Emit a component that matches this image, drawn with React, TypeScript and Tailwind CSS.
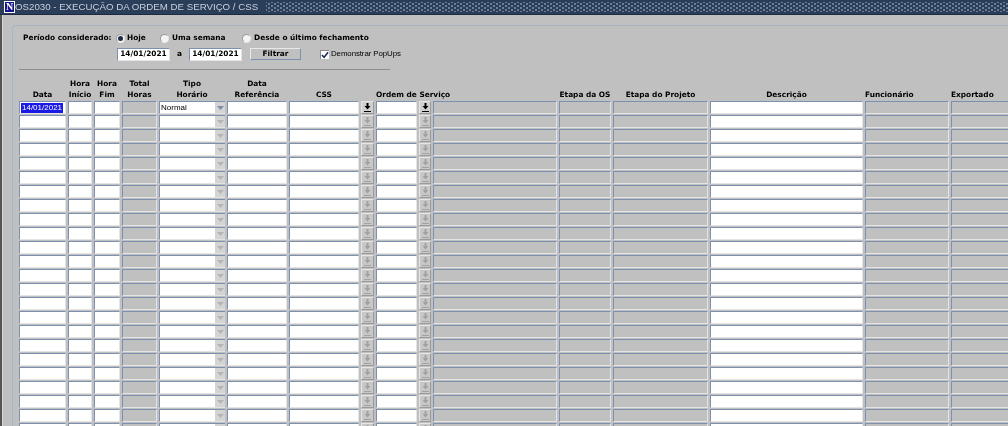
import React from "react";

const gridCls =
  "grid gap-x-[2px] grid-cols-[47px_24px_26px_35px_66px_60px_70px_13px_41px_12px_124px_52px_95px_153px_84px_80px]";

function Field({ gray, children, selected }: { gray?: boolean; children?: React.ReactNode; selected?: boolean }) {
  return (
    <div
      className={`h-[13px] min-w-0 border-t border-l border-t-[#7d90b0] border-l-[#7d90b0] border-b border-r border-b-[#e4e4e4] border-r-[#e4e4e4] flex items-center overflow-hidden ${
        gray ? "bg-[#c0c0c0]" : "bg-white"
      }`}
    >
      {selected ? (
        <span className="bg-[#1a1ae6] text-white text-[8px] leading-[10px] ml-[1px] px-[1px] font-['Liberation_Sans',sans-serif]">
          {children}
        </span>
      ) : (
        children
      )}
    </div>
  );
}

function ArrowIcon({ on }: { on: boolean }) {
  const c = on ? "#000000" : "#a2a2a2";
  return (
    <svg width="9" height="11" viewBox="0 0 9 11">
      <path d="M3.5 1h2v3h2L4.5 7.5 1.5 4h2z" fill={c} />
      <rect x="1" y="9" width="7" height="1" fill={c} />
    </svg>
  );
}

function Btn({ on }: { on: boolean }) {
  return (
    <div
      className={`h-[13px] flex items-center justify-center border-t border-l border-t-[#e6e6e6] border-l-[#e6e6e6] border-b border-r border-b-[#9a9a9a] border-r-[#9a9a9a] ${
        on ? "bg-[#d0d0d0]" : "bg-[#c8c8c8]"
      }`}
    >
      <ArrowIcon on={on} />
    </div>
  );
}

function Combo({ on }: { on: boolean }) {
  return (
    <div className="h-[13px] flex bg-white border-t border-l border-t-[#7d90b0] border-l-[#7d90b0] border-b border-b-[#e4e4e4] overflow-hidden">
      <div className="flex-1 text-[8px] leading-[12px] pl-[1px] text-black font-['Liberation_Sans',sans-serif]">
        {on ? "Normal" : ""}
      </div>
      <div className="w-[10px] bg-[#d4d4d4] flex items-center justify-center">
        <svg width="7" height="4" viewBox="0 0 7 4">
          <path d="M0 0h7L3.5 4z" fill={on ? "#7d8ba6" : "#b4b4b4"} />
        </svg>
      </div>
    </div>
  );
}

function Row({ first }: { first: boolean }) {
  return (
    <div className={`${gridCls} h-[14px]`}>
      <Field selected={first}>{first ? "14/01/2021" : null}</Field>
      <Field />
      <Field />
      <Field gray />
      <Combo on={first} />
      <Field />
      <Field />
      <Btn on={first} />
      <Field />
      <Btn on={first} />
      <Field gray />
      <Field gray />
      <Field gray />
      <Field />
      <Field gray />
      <Field gray />
    </div>
  );
}

function Radio({ on }: { on?: boolean }) {
  return (
    <span className="w-[9px] h-[9px] rounded-full bg-[#f4f4f4] border border-t-[#9a9a9a] border-l-[#9a9a9a] border-b-[#e8e8e8] border-r-[#e8e8e8] flex items-center justify-center shrink-0">
      {on && <span className="w-[5px] h-[5px] rounded-full bg-[#1f2a44]" />}
    </span>
  );
}

function DateBox() {
  return (
    <div className="w-[53px] h-[13px] bg-white border-t border-l border-t-[#7d90b0] border-l-[#7d90b0] border-b border-r border-b-[#e4e4e4] border-r-[#e4e4e4] flex items-center justify-center font-bold text-black">
      14/01/2021
    </div>
  );
}

function H({ l1, l2, cls = "text-center" }: { l1?: string; l2: string; cls?: string }) {
  return (
    <div className={`flex flex-col justify-end whitespace-nowrap ${cls}`}>
      {l1 && <div>{l1}</div>}
      <div>{l2}</div>
    </div>
  );
}

const rows = Array.from({ length: 24 }, (_, i) => i);

export default function App() {
  return (
    <div className="w-[1008px] h-[426px] overflow-hidden flex flex-col bg-[#c0c0c0] text-black font-['DejaVu_Sans',sans-serif] blur-[0.3px]">
      <div className="h-[15px] shrink-0 bg-[#2a3d59] flex items-center border-b border-[#1d2b40]">
        <div className="w-[11px] h-[12px] ml-[4px] bg-[#14148c] border border-white text-white text-[10px] leading-[10px] font-bold text-center font-['Liberation_Serif',serif] shrink-0">
          N
        </div>
        <span className="text-[#c9d1dc] text-[9.7px] whitespace-nowrap font-['Liberation_Sans',sans-serif]">
          OS2030 - EXECUÇÃO DA ORDEM DE SERVIÇO / CSS
        </span>
        <div className="flex-1 ml-[8px] h-[10px] bg-[radial-gradient(circle,#6f8099_0.7px,transparent_1px),radial-gradient(circle,#6f8099_0.7px,transparent_1px)] bg-[length:6px_4px] bg-[position:0_0,3px_2px]" />
      </div>
      <div className="flex flex-1 min-h-0">
        <div className="w-[2px] bg-[#555555] shrink-0" />
        <div className="w-[1px] bg-[#d8d8d8] shrink-0" />
        <div className="flex-1 min-w-0 ml-[9px] mt-[10px] border-t border-l border-[#a9b4c6] rounded-tl-[4px] pl-[6px] text-[7.4px]">
          <div className="flex items-center h-[24px] font-bold -mb-[4px]">
            <span className="ml-[4px] w-[93px] whitespace-nowrap">Período considerado:</span>
            <Radio on />
            <span className="ml-[2px] w-[33px]">Hoje</span>
            <Radio />
            <span className="ml-[3px] w-[70px]">Uma semana</span>
            <Radio />
            <span className="ml-[3px] whitespace-nowrap">Desde o último fechamento</span>
          </div>
          <div className="flex items-center h-[16px] ml-[98px]">
            <DateBox />
            <span className="w-[19px] text-center font-bold">a</span>
            <DateBox />
            <div className="ml-[8px] w-[51px] h-[12px] flex items-center justify-center font-bold border-t border-l border-t-[#e8e8e8] border-l-[#e8e8e8] border-b border-r border-b-[#7d90b0] border-r-[#7d90b0]">
              Filtrar
            </div>
            <div className="ml-[19px] w-[9px] h-[9px] bg-white border-t border-l border-t-[#8c8c8c] border-l-[#8c8c8c] flex items-center justify-center">
              <svg width="8" height="8" viewBox="0 0 9 9">
                <path d="M1 4.5 3.5 7 8 1.5" fill="none" stroke="#1c2c5c" strokeWidth="1.8" />
              </svg>
            </div>
            <span className="ml-[2px] whitespace-nowrap font-['Liberation_Sans',sans-serif] text-[7.9px] tracking-[-0.1px]">Demonstrar PopUps</span>
          </div>
          <div className="w-[371px] h-[1px] bg-[#8e8e8e] mt-[7px] mb-[7px]" />
          <div className={`${gridCls} h-[23px] leading-[11px] font-bold mb-[1px]`}>
            <H l2="Data" />
            <H l1="Hora" l2="Início" />
            <H l1="Hora" l2="Fim" />
            <H l1="Total" l2="Horas" />
            <H l1="Tipo" l2="Horário" />
            <H l1="Data" l2="Referência" />
            <H l2="CSS" />
            <div />
            <H l2="Ordem de Serviço" cls="col-span-3 text-left" />
            <H l2="Etapa da OS" />
            <H l2="Etapa do Projeto" />
            <H l2="Descrição" />
            <H l2="Funcionário" cls="text-left" />
            <H l2="Exportado" cls="text-left" />
          </div>
          {rows.map((i) => (
            <Row key={i} first={i === 0} />
          ))}
        </div>
      </div>
    </div>
  );
}
